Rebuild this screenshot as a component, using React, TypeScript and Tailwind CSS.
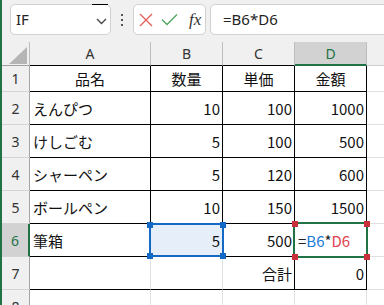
import React from "react";

type Align = "l" | "r" | "c";
type Cell = { v: React.ReactNode; a: Align };

const JP = "font-['Noto_Sans_CJK_JP','Noto_Sans',sans-serif]";
const UI = "font-['Noto_Sans','Liberation_Sans',sans-serif]";

const formula = (
  <span>
    <span className="text-[#222]">=</span>
    <span className="text-[#1a7ad6]">B6</span>
    <span className="text-[#222]">*</span>
    <span className="text-[#e0424f]">D6</span>
  </span>
);

const c = (v: React.ReactNode, a: Align = "r"): Cell => ({ v, a });

const rows: Cell[][] = [
  [c("品名", "c"), c("数量", "c"), c("単価", "c"), c("金額", "c"), c("")],
  [c("えんぴつ", "l"), c(10), c(100), c(1000), c("")],
  [c("けしごむ", "l"), c(5), c(100), c(500), c("")],
  [c("シャーペン", "l"), c(5), c(120), c(600), c("")],
  [c("ボールペン", "l"), c(10), c(150), c(1500), c("")],
  [c("筆箱", "l"), c(5), c(500), c(formula, "l"), c("")],
  [c(""), c(""), c("合計"), c(0), c("")],
  [c(""), c(""), c(""), c(""), c("")],
];

const cols = ["A", "B", "C", "D", ""];

function cellClass(r: number, col: number, a: Align) {
  let cls = "flex items-center overflow-hidden whitespace-nowrap leading-none text-[15px] text-[#111] ";
  cls += r === 5 && col === 1 ? "bg-[#e6eff9] " : "bg-white ";
  if (a === "l") cls += "justify-start pl-[3px] ";
  if (a === "r") cls += "justify-end pr-[2px] ";
  if (a === "c") cls += "justify-center ";
  const inTable = r <= 6 && col <= 3;
  if (col <= 3) {
    if (inTable && !(r === 6 && col < 2)) cls += "border-r border-r-black ";
    else cls += "border-r border-r-[#e1e1e1] ";
  }
  if (inTable) cls += "border-b border-b-black ";
  else cls += "border-b border-b-[#e1e1e1] ";
  return cls;
}

function Handle({ pos, color }: { pos: string; color: string }) {
  return <div className={`absolute w-[6px] h-[6px] ${pos} ${color}`} />;
}

export default function App() {
  return (
    <div className={`w-[384px] h-[305px] overflow-hidden bg-[#f0f0f0] border-l-2 border-l-[#217346] ${UI}`}>
      {/* toolbar */}
      <div className="h-[42px] flex items-start pt-[4px]">
        <div className="relative ml-[8px] w-[101px] h-[31px] flex-none rounded-[5px] border border-[#d1d1d1] bg-white flex items-center pl-[5px]">
          <span className="text-[15px] text-[#242424] leading-none">IF</span>
          <svg className="absolute left-[85px] top-[13px]" width="11" height="7" viewBox="0 0 11 7">
            <polyline points="1,1 5.5,5.5 10,1" fill="none" stroke="#444" strokeWidth="1.3" />
          </svg>
          <div className="absolute left-[81px] top-[-1px] w-[16px] h-[1px] bg-black" />
        </div>
        <div className="w-[22px] h-[31px] flex-none flex flex-col items-center justify-center gap-[3px]">
          <div className="w-[2px] h-[2px] bg-[#555]" />
          <div className="w-[2px] h-[2px] bg-[#555]" />
          <div className="w-[2px] h-[2px] bg-[#555]" />
        </div>
        <div className="w-[73px] h-[31px] flex-none rounded-[5px] border border-[#d1d1d1] bg-white flex items-center pl-[5px]">
          <svg width="14" height="14" viewBox="0 0 14 14">
            <path d="M1 1 L13 13 M13 1 L1 13" stroke="#e25f5f" strokeWidth="1.4" fill="none" />
          </svg>
          <svg className="ml-[8px]" width="17" height="13" viewBox="0 0 17 13">
            <polyline points="1,6.5 6,11.5 16,1.5" fill="none" stroke="#55a562" strokeWidth="1.4" />
          </svg>
          <span className="ml-[11px] font-['Liberation_Serif',serif] italic text-[17px] text-[#333] leading-none">fx</span>
        </div>
        <div className="ml-[4px] w-[200px] h-[31px] flex-none rounded-[5px] border border-[#d1d1d1] bg-white flex items-center pl-[12px]">
          <span className="text-[15px] text-[#242424] leading-none">=B6*D6</span>
        </div>
      </div>

      {/* grid */}
      <div className="relative">
        <div className="grid grid-cols-[28px_121px_72px_72px_72px_1fr] grid-rows-[24px_26px_33px_33px_33px_33px_33px_33px_33px]">
          {/* header row */}
          <div className="relative border-r border-r-[#bdbdbd] border-b border-b-[#a0a0a0]">
            <svg className="absolute left-[7px] top-[5px]" width="18" height="17" viewBox="0 0 18 17">
              <polygon points="18,0 18,17 0,17" fill="#b5b5b5" />
            </svg>
          </div>
          {cols.map((l, i) => (
            <div
              key={i}
              className={
                i === 3
                  ? "flex items-center justify-center text-[14px] text-[#217346] bg-[#d2d2d2] border-r border-r-[#bdbdbd] border-b-2 border-b-[#217346]"
                  : i === 4
                  ? "flex items-center justify-center text-[14px] text-[#333] border-b border-b-[#d0d0d0]"
                  : "flex items-center justify-center text-[14px] text-[#333] border-r border-r-[#bdbdbd] border-b border-b-black"
              }
            >
              {l}
            </div>
          ))}

          {rows.map((row, r) => (
            <React.Fragment key={r}>
              <div
                className={
                  r === 5
                    ? "flex items-center justify-center text-[14px] text-[#217346] bg-[#d2d2d2] border-r-2 border-r-[#217346] border-b border-b-[#d4d4d4]"
                    : "flex items-center justify-center text-[14px] text-[#333] border-r border-r-[#a6a6a6] border-b border-b-[#d4d4d4]"
                }
              >
                {r + 1}
              </div>
              {row.map((cell, col) => (
                <div key={col} className={`${cellClass(r, col, cell.a)} ${JP}`}>
                  {cell.v}
                </div>
              ))}
            </React.Fragment>
          ))}
        </div>

        {/* B6 selection */}
        <div className="absolute left-[147px] top-[181px] w-[75px] h-[34px] border-2 border-[#1469c4]" />
        <Handle pos="left-[145px] top-[180px]" color="bg-[#1469c4]" />
        <Handle pos="left-[218px] top-[180px]" color="bg-[#1469c4]" />
        <Handle pos="left-[145px] top-[211px]" color="bg-[#1469c4]" />
        <Handle pos="left-[218px] top-[211px]" color="bg-[#1469c4]" />

        {/* D6 active / reference */}
        <div className="absolute left-[291px] top-[180px] w-[75px] h-[36px] border-2 border-[#217346]" />
        <Handle pos="left-[290px] top-[179px]" color="bg-[#c8313a]" />
        <Handle pos="left-[362px] top-[179px]" color="bg-[#c8313a]" />
        <Handle pos="left-[290px] top-[212px]" color="bg-[#c8313a]" />
        <Handle pos="left-[362px] top-[212px]" color="bg-[#c8313a]" />
      </div>
    </div>
  );
}
